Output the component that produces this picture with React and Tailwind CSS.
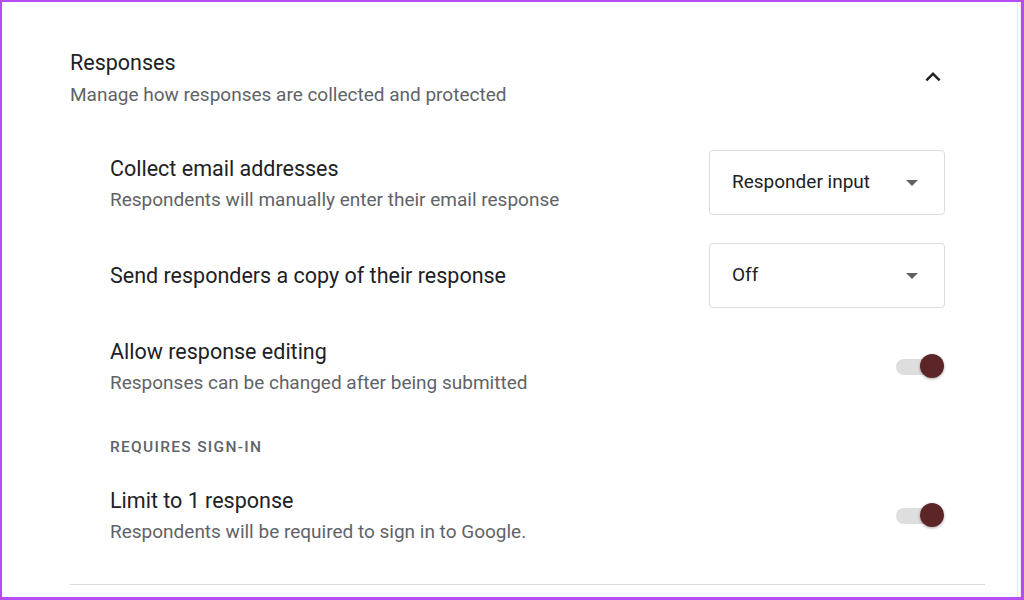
import React from 'react';

const ArrowDrop = () => (
    <svg width="12" height="6" viewBox="0 0 10 5" className="shrink-0">
        <path d="M0 0l5 5 5-5z" fill="#5f6368" />
    </svg>
);

const Select = ({ value }) => (
    <div className="w-[236px] h-[65px] rounded-[4px] border border-[#dadce0] flex items-center justify-between pl-[22px] pr-[26px]">
        <span className="text-[19px] text-[#202124]">{value}</span>
        <ArrowDrop />
    </div>
);

const Toggle = () => (
    <div className="relative w-[49px] h-[26px] flex items-center">
        <div className="w-[40px] h-[16px] rounded-full bg-[#dedede]" />
        <div className="absolute right-[1px] top-0 w-[24px] h-[24px] rounded-full bg-[#5c2629] shadow-[0_1px_3px_rgba(0,0,0,0.35)]" />
    </div>
);

const SettingText = ({ title, subtitle, className = 'pt-[1px]' }) => (
    <div className={`flex flex-col gap-[7px] ${className}`}>
        <div className="text-[21.5px] leading-[24px] text-[#202124]">{title}</div>
        {subtitle && <div className="text-[19px] leading-[24px] text-[#5f6368]">{subtitle}</div>}
    </div>
);

export default function App() {
    return (
        <div className="w-[1024px] h-[600px] bg-white border-t-2 border-l-2 border-b-[3px] border-r-[3px] border-[#b44df6] flex overflow-hidden" style={{ fontFamily: 'Roboto, "Liberation Sans", sans-serif' }}>
            <div className="flex-1 pl-[68px] pr-[32px] pt-[47px]">
                {/* header */}
                <div className="flex justify-between items-start pr-10">
                    <div>
                        <div className="text-[21.5px] leading-[28px] text-[#202124]">Responses</div>
                        <div className="mt-[6px] text-[19px] leading-[24px] text-[#5f6368]">Manage how responses are collected and protected</div>
                    </div>
                    <svg width="30" height="30" viewBox="0 0 24 24" className="mt-[13px] -mr-[3px]">
                        <path d="M12 8l-6 6 1.41 1.41L12 10.83l4.59 4.58L18 14z" fill="#202124" />
                    </svg>
                </div>

                <div className="pl-10 pr-10">
                    <div className="mt-[43px] flex items-center justify-between">
                        <SettingText className="pt-[3px]" title="Collect email addresses" subtitle="Respondents will manually enter their email response" />
                        <Select value="Responder input" />
                    </div>
                    <div className="mt-[28px] flex items-center justify-between">
                        <SettingText title="Send responders a copy of their response" />
                        <Select value="Off" />
                    </div>
                    <div className="mt-[31px] flex items-center justify-between">
                        <SettingText title="Allow response editing" subtitle="Responses can be changed after being submitted" />
                        <Toggle />
                    </div>
                    <div className="mt-[42px] text-[15.5px] leading-[20px] font-medium tracking-[1.3px] text-[#5f6368]">REQUIRES SIGN-IN</div>
                    <div className="mt-[31px] flex items-center justify-between">
                        <SettingText title="Limit to 1 response" subtitle="Respondents will be required to sign in to Google." />
                        <Toggle />
                    </div>
                </div>

                <div className="mt-[40px] border-t border-[#dadce0]" />
            </div>
            <div className="w-[4px] border-l border-r border-[#ececec]" />
        </div>
    );
}
